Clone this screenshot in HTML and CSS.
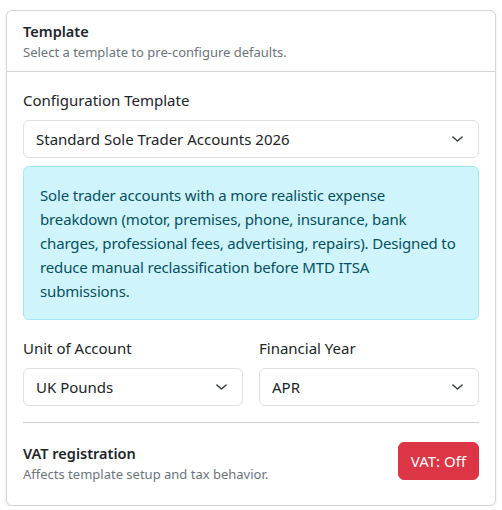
FILE: index.html
```html
<!DOCTYPE html>
<html lang="en">
<head>
  <meta charset="UTF-8">
  <title>Template</title>
  <link rel="stylesheet" href="styles.css">
</head>
<body>
  <div class="card">
    <div class="card-header">
      <div class="card-title">Template</div>
      <div class="card-sub">Select a template to pre-configure defaults.</div>
    </div>

    <div class="card-body">
      <label class="field-label" for="template">Configuration Template</label>
      <div class="select-wrap">
        <select id="template" class="form-select">
          <option>Standard Sole Trader Accounts 2026</option>
        </select>
        <svg class="chevron" viewBox="0 0 12 6" width="11" height="6"><path d="M1 0.8l5 4.4 5-4.4" fill="none" stroke="#343a40" stroke-width="1.6" stroke-linecap="round" stroke-linejoin="round"/></svg>
      </div>

      <div class="alert-info">
        Sole trader accounts with a more realistic expense breakdown (motor, premises, phone, insurance, bank charges, professional fees, advertising, repairs). Designed to reduce manual reclassification before MTD ITSA submissions.
      </div>

      <div class="row">
        <div class="col">
          <label class="field-label" for="unit">Unit of Account</label>
          <div class="select-wrap">
            <select id="unit" class="form-select">
              <option>UK Pounds</option>
            </select>
            <svg class="chevron" viewBox="0 0 12 6" width="11" height="6"><path d="M1 0.8l5 4.4 5-4.4" fill="none" stroke="#343a40" stroke-width="1.6" stroke-linecap="round" stroke-linejoin="round"/></svg>
          </div>
        </div>
        <div class="col">
          <label class="field-label" for="year">Financial Year</label>
          <div class="select-wrap">
            <select id="year" class="form-select">
              <option>APR</option>
            </select>
            <svg class="chevron" viewBox="0 0 12 6" width="11" height="6"><path d="M1 0.8l5 4.4 5-4.4" fill="none" stroke="#343a40" stroke-width="1.6" stroke-linecap="round" stroke-linejoin="round"/></svg>
          </div>
        </div>
      </div>

      <hr class="divider">

      <div class="vat-row">
        <div>
          <div class="vat-title">VAT registration</div>
          <div class="vat-sub">Affects template setup and tax behavior.</div>
        </div>
        <button class="btn-danger">VAT: Off</button>
      </div>
    </div>
  </div>
</body>
</html>
```

FILE: styles.css
```css
html, body {
  margin: 0;
  padding: 0;
  background: #ffffff;
  color: #212529;
  font-family: 'Noto Sans', 'Open Sans', sans-serif;
  font-size: 15px;
}

body {
  padding: 10px 6px 0 6px;
}

.card {
  width: 490px;
  box-sizing: border-box;
  border: 1px solid #d5d6d8;
  border-radius: 6px;
  box-shadow: 0 2px 4px rgba(0, 0, 0, 0.075);
  background: #fff;
}

.card-header {
  padding: 9px 16px 9px 16px;
  border-bottom: 1px solid #d5d6d8;
}

.card-title {
  font-weight: 600;
  font-size: 14.5px;
  line-height: 22px;
}

.card-sub {
  font-size: 13px;
  line-height: 20px;
  color: #6c757d;
}

.card-body {
  padding: 16px 16px 21px 16px;
}

.field-label {
  display: block;
  line-height: 24px;
  margin-bottom: 8px;
}

.select-wrap {
  position: relative;
}

.form-select {
  display: block;
  width: 100%;
  box-sizing: border-box;
  appearance: none;
  -webkit-appearance: none;
  font-family: inherit;
  font-size: 15px;
  line-height: 24px;
  color: #212529;
  background: #fff;
  border: 1px solid #dee2e6;
  border-radius: 6px;
  padding: 6px 36px 6px 12px;
  outline: none;
}

.chevron {
  position: absolute;
  right: 16px;
  top: 16px;
  pointer-events: none;
}

.alert-info {
  margin-top: 8px;
  margin-bottom: 16px;
  padding: 16px 20px 16px 16px;
  background: #cff4fc;
  border: 1px solid #9eeaf9;
  border-radius: 6px;
  color: #055160;
  line-height: 24px;
  letter-spacing: -0.15px;
}

.row {
  display: flex;
  gap: 16px;
}

.row .col {
  flex: 1;
  min-width: 0;
}

.divider {
  border: 0;
  border-top: 1px solid #cfd1d3;
  margin: 16px 0 19px 0;
}

.vat-row {
  display: flex;
  align-items: flex-start;
  justify-content: space-between;
}

.vat-title {
  font-weight: 600;
  font-size: 14.5px;
  line-height: 22px;
}

.vat-sub {
  font-size: 13px;
  line-height: 20px;
  color: #6c757d;
}

.btn-danger {
  font-family: inherit;
  font-size: 15px;
  line-height: 24px;
  padding: 6px 12px;
  color: #fff;
  background: #dc3545;
  border: 1px solid #dc3545;
  border-radius: 6px;
  cursor: pointer;
}
```
